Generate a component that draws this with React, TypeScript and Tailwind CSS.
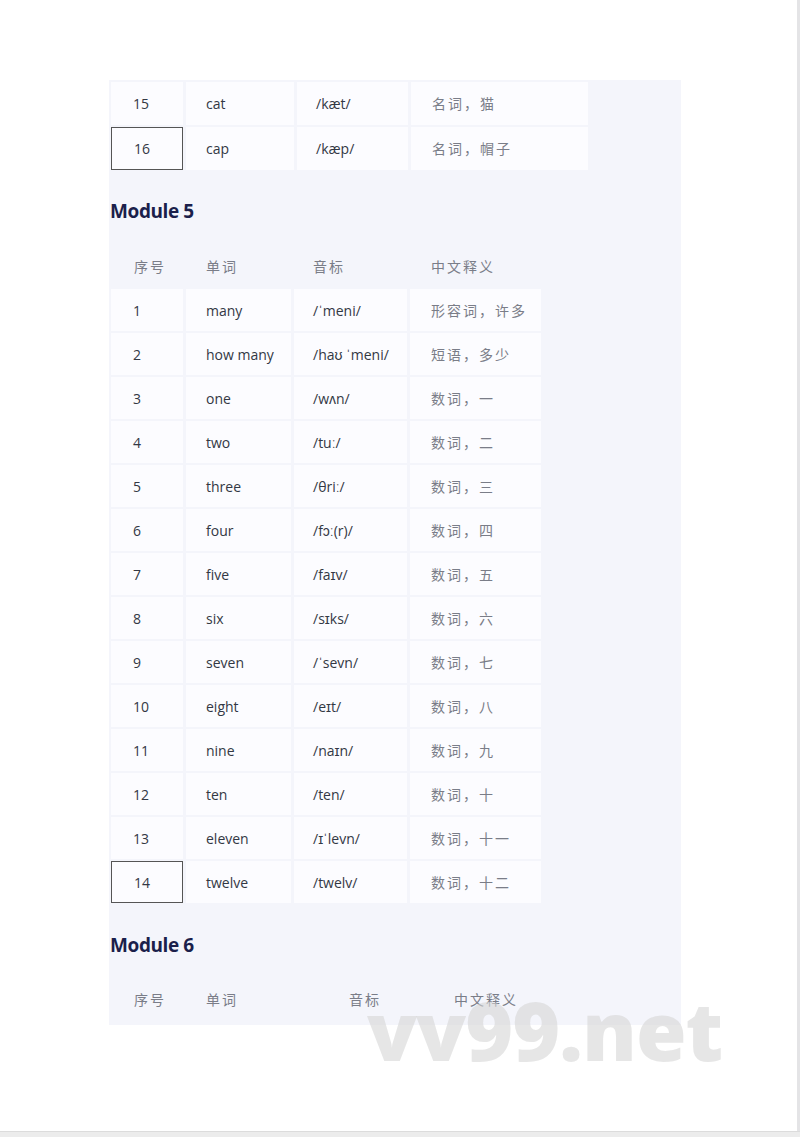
const sans = "font-['Open_Sans','Liberation_Sans',sans-serif]";
const cjk = "font-['Noto_Sans_CJK_SC',sans-serif]";

type Row = [string, string, string, string];

const prevRows: Row[] = [
  ["15", "cat", "/kæt/", "名词，猫"],
  ["16", "cap", "/kæp/", "名词，帽子"],
];

const module5: Row[] = [
  ["1", "many", "/ˈmeni/", "形容词，许多"],
  ["2", "how many", "/haʊ ˈmeni/", "短语，多少"],
  ["3", "one", "/wʌn/", "数词，一"],
  ["4", "two", "/tuː/", "数词，二"],
  ["5", "three", "/θriː/", "数词，三"],
  ["6", "four", "/fɔː(r)/", "数词，四"],
  ["7", "five", "/faɪv/", "数词，五"],
  ["8", "six", "/sɪks/", "数词，六"],
  ["9", "seven", "/ˈsevn/", "数词，七"],
  ["10", "eight", "/eɪt/", "数词，八"],
  ["11", "nine", "/naɪn/", "数词，九"],
  ["12", "ten", "/ten/", "数词，十"],
  ["13", "eleven", "/ɪˈlevn/", "数词，十一"],
  ["14", "twelve", "/twelv/", "数词，十二"],
];

function WordTable({ rows, cols, boxed, h }: { rows: Row[]; cols: string; boxed: string; h: string }) {
  return (
    <div className={`grid ${cols} gap-x-[3px] gap-y-[2px]`}>
      {rows.map((r) => (
        <div key={r[0]} className="contents">
          <div
            className={`flex ${h} items-center pl-[22px] text-[14px] text-[#333844] ${
              r[0] === boxed ? "border border-[#555] bg-[#fcfcff]" : "bg-[#fcfcff]"
            }`}
          >
            {r[0]}
          </div>
          <div className={`flex ${h} items-center bg-[#fcfcff] pl-[20px] text-[14px] text-[#333844]`}>{r[1]}</div>
          <div className={`flex ${h} items-center bg-[#fcfcff] pl-[19px] text-[14px] text-[#333844]`}>{r[2]}</div>
          <div className={`flex ${h} items-center bg-[#fcfcff] pl-[21px] text-[14px] tracking-[2px] text-[#7a7d88] ${cjk}`}>
            {r[3]}
          </div>
        </div>
      ))}
    </div>
  );
}

function Heading({ children }: { children: string }) {
  return <h2 className="h-[28px] text-[19px] font-bold leading-[28px] tracking-[-0.4px] text-[#1b1f4b]">{children}</h2>;
}

export default function App() {
  return (
    <div className={`relative h-[1137px] w-[800px] overflow-hidden bg-white ${sans}`}>
      <div className="flex h-[1131px] border-r-[3px] border-[#e4e4e6]">
        <div className="ml-[109px] mt-[80px] flex h-[945px] w-[572px] flex-col bg-[#f4f5fb] pt-[2px]">
          <div className="pl-[2px]">
            <WordTable rows={prevRows} cols="grid-cols-[72px_108px_111px_177px]" boxed="16" h="h-[43px]" />
          </div>

          <div className="mt-[27px] pl-[1px]">
            <Heading>Module 5</Heading>
          </div>
          <div className={`mt-[21px] flex h-[40px] items-center text-[14px] tracking-[2px] text-[#7a7d88] ${cjk}`}>
            <span className="ml-[25px] w-[72px]">序号</span>
            <span className="w-[107px]">单词</span>
            <span className="w-[118px]">音标</span>
            <span>中文释义</span>
          </div>
          <div className="mt-[3px] pl-[2px]">
            <WordTable rows={module5} cols="grid-cols-[72px_105px_113px_131px]" boxed="14" h="h-[42px]" />
          </div>

          <div className="mt-[28px] pl-[1px]">
            <Heading>Module 6</Heading>
          </div>
          <div className={`mt-[20px] flex h-[40px] items-center text-[14px] tracking-[2px] text-[#7a7d88] ${cjk}`}>
            <span className="ml-[25px] w-[72px]">序号</span>
            <span className="w-[143px]">单词</span>
            <span className="w-[105px]">音标</span>
            <span>中文释义</span>
          </div>
        </div>
      </div>
      <div className="h-[6px] border-t border-[#dcdcdc] bg-[#ececec]" />

      {/* watermark */}
      <div className="pointer-events-none absolute left-[367px] top-[988px] font-['Open_Sans',sans-serif] text-[82px] font-extrabold leading-none tracking-[-1px] text-[#d6d6d6]/60">
        vv99.net
      </div>
    </div>
  );
}
